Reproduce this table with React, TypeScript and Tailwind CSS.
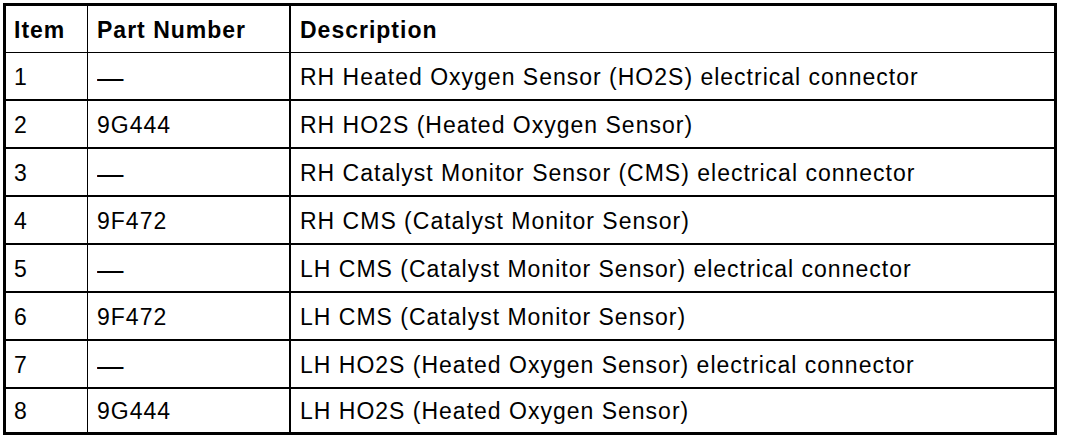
import React from 'react';

const rows = [
  { item: '1', part: '—', desc: 'RH Heated Oxygen Sensor (HO2S) electrical connector' },
  { item: '2', part: '9G444', desc: 'RH HO2S (Heated Oxygen Sensor)' },
  { item: '3', part: '—', desc: 'RH Catalyst Monitor Sensor (CMS) electrical connector' },
  { item: '4', part: '9F472', desc: 'RH CMS (Catalyst Monitor Sensor)' },
  { item: '5', part: '—', desc: 'LH CMS (Catalyst Monitor Sensor) electrical connector' },
  { item: '6', part: '9F472', desc: 'LH CMS (Catalyst Monitor Sensor)' },
  { item: '7', part: '—', desc: 'LH HO2S (Heated Oxygen Sensor) electrical connector' },
  { item: '8', part: '9G444', desc: 'LH HO2S (Heated Oxygen Sensor)' },
];

function PartCell({ value }: { value: string }) {
  // the dash in the scan is wider than a plain em dash
  if (value === '—') {
    return <span className="inline-block origin-left scale-x-[1.15] scale-y-[1.4]">{value}</span>;
  }
  return <>{value}</>;
}

export default function App() {
  return (
    <div className="w-[1072px] h-[444px] bg-white text-black font-['Liberation_Sans',Arial,sans-serif] text-[23px] tracking-[1px] pt-[3px] pl-[3px]">
      <div className="w-[1054px] border-[3px] border-black">
        {/* Header */}
        <div className="flex h-[47px] border-b border-black font-bold">
          <div className="w-[82px] flex items-center pl-[8px] pt-[3px] border-r border-black">Item</div>
          <div className="w-[203px] flex items-center pl-[9px] pt-[3px] border-r-2 border-black">Part Number</div>
          <div className="flex-1 flex items-center pl-[9px] pt-[3px]">Description</div>
        </div>

        {/* Rows */}
        {rows.map((row, i) => {
          const last = i === rows.length - 1;
          return (
            <div
              key={row.item}
              className={`flex ${last ? 'h-[43px]' : 'h-[48px] border-b-2 border-black'}`}
            >
              <div className="w-[82px] flex items-center pl-[8px] pt-[2px] border-r border-black">{row.item}</div>
              <div className="w-[203px] flex items-center pl-[9px] pt-[2px] border-r-2 border-black">
                <PartCell value={row.part} />
              </div>
              <div className="flex-1 flex items-center pl-[9px] pt-[2px] whitespace-nowrap">{row.desc}</div>
            </div>
          );
        })}
      </div>
    </div>
  );
}
